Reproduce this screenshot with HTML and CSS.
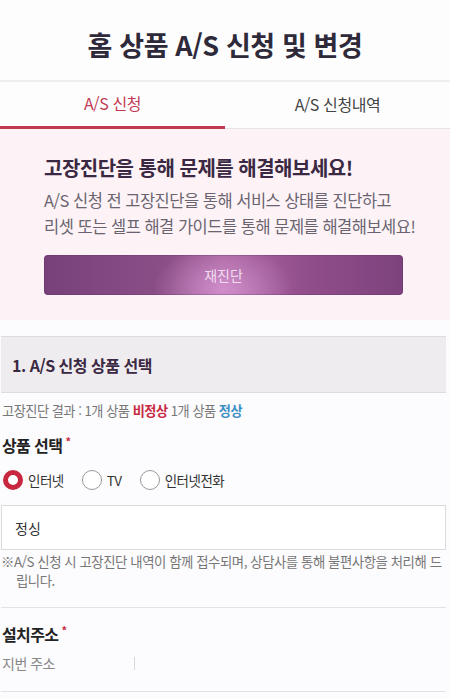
FILE: index.html
```html
<!DOCTYPE html>
<html lang="ko">
<head>
<meta charset="utf-8">
<title>홈 상품 A/S 신청 및 변경</title>
<link rel="stylesheet" href="styles.css">
</head>
<body>
<header class="page-header">
  <h1 class="page-title">홈 상품 A/S 신청 및 변경</h1>
</header>
<nav class="tabs">
  <a class="tab tab-active">A/S 신청</a>
  <a class="tab">A/S 신청내역</a>
</nav>
<section class="promo">
  <h2 class="promo-title">고장진단을 통해 문제를 해결해보세요!</h2>
  <p class="promo-desc">A/S 신청 전 고장진단을 통해 서비스 상태를 진단하고<br>리셋 또는 셀프 해결 가이드를 통해 문제를 해결해보세요!</p>
  <button class="promo-btn">재진단</button>
</section>
<main class="content">
  <div class="section-head">1. A/S 신청 상품 선택</div>
  <p class="diag">고장진단 결과 : 1개 상품 <b class="bad">비정상</b> 1개 상품 <b class="good">정상</b></p>
  <h3 class="field-label">상품 선택<span class="req">*</span></h3>
  <div class="radios">
    <label class="radio"><span class="dot dot-on"></span>인터넷</label>
    <label class="radio"><span class="dot"></span>TV</label>
    <label class="radio"><span class="dot"></span>인터넷전화</label>
  </div>
  <div class="input-box">정싱</div>
  <p class="note">※A/S 신청 시 고장진단 내역이 함께 접수되며, 상담사를 통해 불편사항을 처리해 드립니다.</p>
  <div class="addr">
    <h3 class="field-label">설치주소<span class="req">*</span></h3>
    <div class="addr-row"><span class="addr-type">지번 주소</span><span class="addr-sep"></span></div>
  </div>
</main>
</body>
</html>
```
FILE: styles.css
```css
* { box-sizing: border-box; }
body {
  margin: 0;
  background: #fcfbfd;
  font-family: "Noto Sans CJK KR", "Noto Sans", sans-serif;
  color: #333;
}
.page-header {
  height: 82px;
  display: flex;
  align-items: center;
  justify-content: center;
  border-bottom: 2px solid #efedf0;
  background: #fefdfe;
}
.page-title {
  margin: 8px 0 0;
  font-size: 27px;
  font-weight: 700;
  color: #2e2a3a;
  letter-spacing: -0.4px;
}
.tabs {
  display: flex;
  height: 47px;
  border-bottom: 1px solid #e6e3e8;
  background: #fefdfe;
}
.tab {
  flex: 1;
  display: flex;
  align-items: center;
  justify-content: center;
  font-size: 16px;
  color: #444;
  letter-spacing: -0.4px;
  padding-bottom: 2px;
}
.tab-active {
  color: #c23a52;
  border-bottom: 3px solid #c23a52;
  margin-bottom: -1px;
}
.promo {
  background: #fdf3f6;
  padding: 26px 47px 25px 44px;
}
.promo-title {
  margin: 0;
  font-size: 20px;
  line-height: 26px;
  font-weight: 700;
  color: #3b2842;
  letter-spacing: -0.5px;
}
.promo-desc {
  margin: 6px -10px 0 0;
  font-size: 16.5px;
  line-height: 26px;
  color: #6a6470;
  letter-spacing: -0.5px;
  white-space: nowrap;
}
.promo-btn {
  display: block;
  width: 100%;
  height: 40px;
  margin-top: 16px;
  border: 0;
  border-radius: 4px;
  font-family: inherit;
  font-size: 14px;
  color: #f1dcef;
  background:
    radial-gradient(ellipse 70px 45px at 50% 85%, rgba(214,150,210,0.85), rgba(214,150,210,0) 100%),
    linear-gradient(90deg, #77417a 0%, #8c4f88 35%, #a9649f 50%, #8f4d8a 75%, #7d427d 100%);
  box-shadow: inset 0 0 0 1px rgba(90,40,90,0.25);
}
.content {
  padding: 16px 4px 0 1px;
}
.section-head {
  height: 57px;
  display: flex;
  align-items: center;
  padding-left: 11px;
  background: #efecf0;
  border-top: 1px solid #dedbe0;
  border-bottom: 1px solid #dedbe0;
  font-size: 16px;
  font-weight: 700;
  color: #3b2842;
  letter-spacing: -0.5px;
}
.diag {
  margin: 9px 0 0;
  padding-left: 1px;
  font-size: 13.2px;
  line-height: 18px;
  color: #777;
  letter-spacing: -0.5px;
}
.bad { color: #c8283f; }
.good { color: #3d8fc4; }
.field-label {
  margin: 14px 0 0;
  padding-left: 1px;
  font-size: 16px;
  line-height: 22px;
  font-weight: 700;
  color: #222;
  letter-spacing: -0.6px;
}
.req {
  color: #c8283f;
  font-size: 11px;
  vertical-align: top;
  margin-left: 3px;
  line-height: 14px;
}
.radios {
  display: flex;
  align-items: center;
  gap: 18px;
  margin-top: 14px;
  padding-left: 2px;
}
.radio {
  display: flex;
  align-items: center;
  gap: 5px;
  font-size: 13.5px;
  color: #333;
  letter-spacing: -0.5px;
}
.dot {
  width: 20px;
  height: 20px;
  border-radius: 50%;
  border: 1px solid #999;
  background: #fff;
}
.dot-on {
  border: 5px solid #c8283f;
}
.input-box {
  margin-top: 15px;
  height: 45px;
  border: 1px solid #dcdadd;
  background: #fff;
  display: flex;
  align-items: center;
  padding-left: 13px;
  font-size: 14px;
  color: #333;
}
.note {
  margin: 2px 0 0;
  padding-left: 15px;
  text-indent: -15px;
  font-size: 13.4px;
  line-height: 19px;
  color: #777;
  letter-spacing: -0.45px;
  word-break: break-all;
}
.addr {
  margin-top: 17px;
  border-top: 1px solid #e3e1e4;
  border-bottom: 1px solid #e3e1e4;
  padding: 4px 0 18px;
}
.addr .field-label { margin-top: 11px; }
.addr-row {
  display: flex;
  align-items: center;
  margin-top: 8px;
}
.addr-type {
  width: 133px;
  font-size: 14px;
  color: #888;
  letter-spacing: -0.5px;
  padding-left: 1px;
}
.addr-sep {
  width: 1px;
  height: 13px;
  background: #d8d6d9;
}
```
